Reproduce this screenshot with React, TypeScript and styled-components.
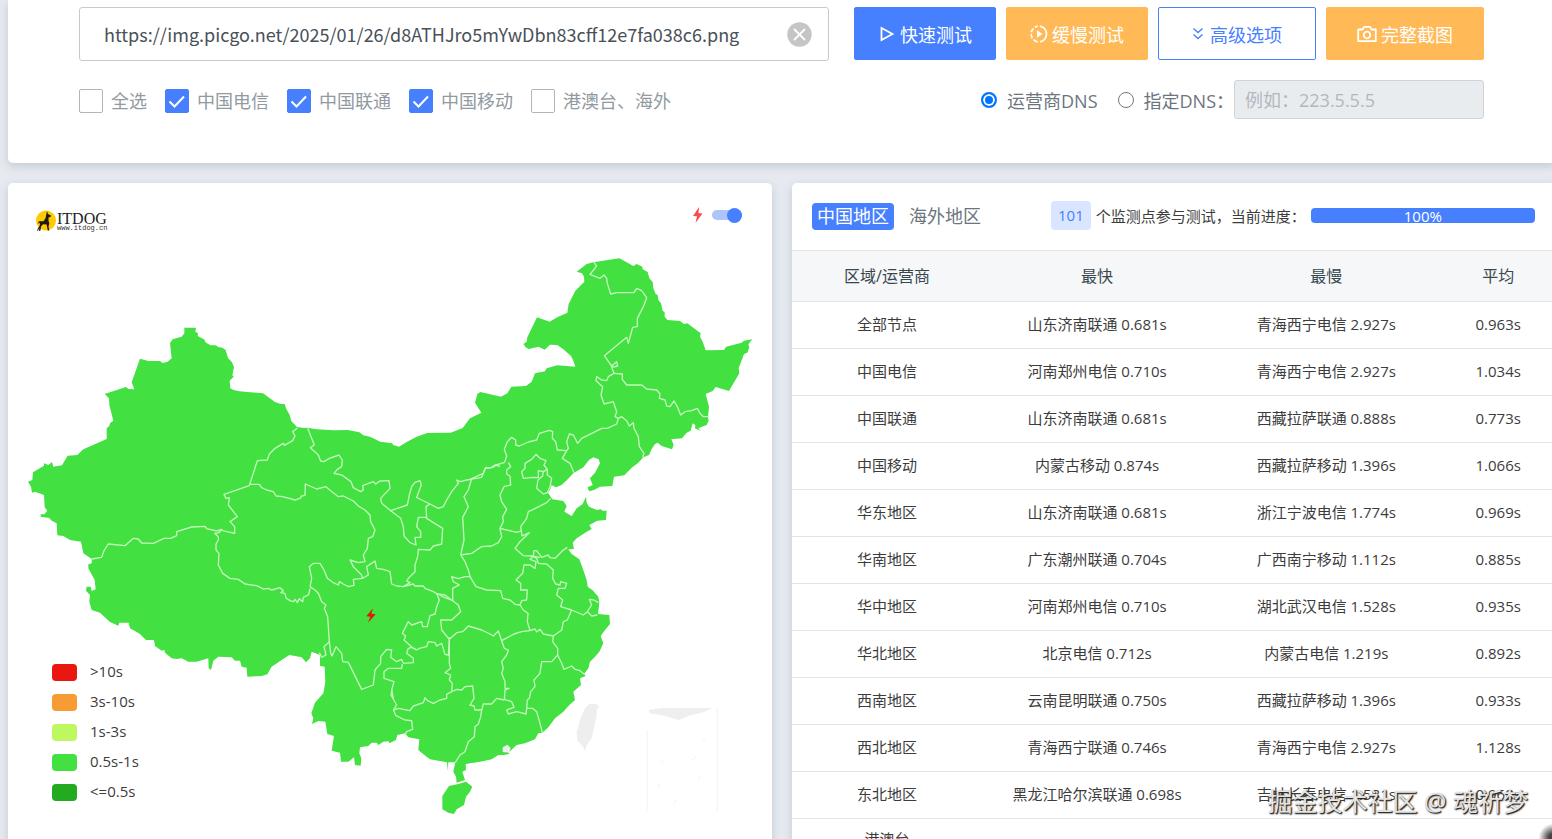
import React, { useState } from "react";
import styled, { createGlobalStyle, css } from "styled-components";

const GlobalStyle = createGlobalStyle`
  * { box-sizing: border-box; }
  body {
    margin: 0;
    background: #e6eaf0;
    color: #3c3c3c;
    font-family: "Open Sans", "Noto Sans CJK SC", sans-serif;
    font-size: 15px;
  }
  button, input { font-family: inherit; }
`;

const Page = styled.div`
  position: relative;
  height: 100vh;
  overflow: hidden;
`;

const Content = styled.div`
  display: flex;
  flex-direction: column;
  gap: 20px;
  margin: 0 -4px 0 8px;
`;

const Card = styled.section`
  background: #fff;
  border-radius: 5px;
  box-shadow: 0 3px 10px rgba(60, 75, 100, 0.2);
`;

const SearchCard = styled(Card)`
  height: 163px;
  padding: 7px 72px 0 71px;
  border-radius: 0 0 5px 5px;
`;

const SearchRow = styled.div`
  display: flex;
  align-items: flex-start;
  gap: 10px;
`;

const UrlBox = styled.div`
  flex: 1;
  display: flex;
  align-items: center;
  height: 54px;
  margin-right: 15px;
  padding: 0 16px 0 24px;
  border: 1px solid #c6cace;
  border-radius: 3px;
`;

const UrlInput = styled.input`
  flex: 1;
  min-width: 0;
  padding: 0;
  border: 0;
  outline: 0;
  color: #495057;
  font-family: "Noto Sans CJK SC", sans-serif;
  font-size: 18px;
  line-height: 28px;
`;

const ClearButton = styled.button`
  display: flex;
  padding: 0;
  border: 0;
  background: none;
`;

const buttonTones = {
  primary: css`background: #4680ff; border-color: #4680ff; color: #fff;`,
  warning: css`background: #ffba57; border-color: #ffba57; color: #fff;`,
  outline: css`background: #fff; border-color: #4680ff; color: #4680ff;`,
};

const ActionButton = styled.button<{ $tone: keyof typeof buttonTones; $wide?: boolean }>`
  display: flex;
  align-items: center;
  justify-content: center;
  gap: 4px;
  width: ${(p) => (p.$wide ? 158 : 142)}px;
  height: 53px;
  padding: 0;
  border: 1px solid;
  border-radius: 2px;
  font-size: 18px;
  ${(p) => buttonTones[p.$tone]}
`;

const OptionRow = styled.div`
  display: flex;
  align-items: center;
  justify-content: space-between;
  margin-top: 19px;
  color: #919aa1;
  font-size: 18px;
`;

const Options = styled.div<{ $gap: number }>`
  display: flex;
  align-items: center;
  gap: ${(p) => p.$gap}px;
`;

const CheckLabel = styled.label`
  display: flex;
  align-items: center;
  gap: 8px;
`;

const CheckBox = styled.input`
  appearance: none;
  width: 24px;
  height: 24px;
  margin: 2px 0 0;
  border: 1px solid #adb5bd;
  border-radius: 2px;
  background: #fff;
  &:checked {
    border-color: #4680ff;
    background: #4680ff;
  }
`;

const CheckWrap = styled.span`
  position: relative;
  display: flex;
  svg {
    position: absolute;
    inset: 2px 0 0;
    pointer-events: none;
  }
`;

const RadioLabel = styled.label`
  display: flex;
  align-items: center;
  gap: 10px;
  color: #6c757d;
`;

const Radio = styled.input`
  appearance: none;
  width: 16px;
  height: 16px;
  margin: 0;
  border: 1px solid #767676;
  border-radius: 50%;
  background: #fff;
  &:checked {
    border: 2px solid #0075ff;
    background: #0075ff;
    box-shadow: inset 0 0 0 2px #fff;
  }
`;

const DnsInput = styled.input`
  width: 250px;
  height: 39px;
  margin-left: -20px;
  padding: 0 10px;
  border: 1px solid #ced4da;
  border-radius: 3px;
  background: #e9ecef;
  font-size: 18px;
  &::placeholder {
    color: #b1b8be;
    opacity: 1;
  }
`;

const Panels = styled.main`
  display: flex;
  align-items: stretch;
  gap: 20px;
`;

const Panel = styled(Card)`
  flex: 1;
  min-width: 0;
  overflow: hidden;
`;

const MapHead = styled.header`
  display: flex;
  align-items: flex-start;
  justify-content: space-between;
  height: 65px;
  padding: 24px 30px 0 26px;
`;

const SwitchLabel = styled.label`
  display: flex;
  align-items: center;
  gap: 9px;
`;

const Switch = styled.input`
  appearance: none;
  display: flex;
  align-items: center;
  justify-content: flex-end;
  width: 30px;
  height: 10px;
  margin: 0;
  border-radius: 5px;
  background: #aec5fc;
  &::before {
    content: "";
    width: 15px;
    height: 15px;
    flex: none;
    border-radius: 50%;
    background: #4680ff;
  }
  &:not(:checked) {
    justify-content: flex-start;
  }
`;

const MapArea = styled.div`
  position: relative;
  > svg {
    display: block;
    width: 100%;
  }
`;

const Legend = styled.ul`
  position: absolute;
  left: 44px;
  top: 408px;
  display: flex;
  flex-direction: column;
  margin: 0;
  padding: 0;
  list-style: none;
`;

const LegendItem = styled.li`
  display: flex;
  align-items: center;
  gap: 13px;
  height: 30px;
  line-height: 20px;
`;

const Swatch = styled.span<{ $color: string }>`
  width: 25px;
  height: 17px;
  margin-top: 2px;
  border-radius: 4px;
  background: ${(p) => p.$color};
`;

const ResultHead = styled.header`
  display: flex;
  align-items: center;
  height: 67px;
  padding: 0 21px 0 20px;
`;

const Tab = styled.button<{ $active?: boolean }>`
  height: 27px;
  margin-right: 10px;
  padding: 0 5px;
  border: 0;
  border-radius: 4px;
  background: ${(p) => (p.$active ? "#4680ff" : "transparent")};
  color: ${(p) => (p.$active ? "#fff" : "#6c757d")};
  font-size: 18px;
  line-height: 27px;
`;

const Progress = styled.div`
  flex: 1;
  display: flex;
  align-items: center;
  gap: 5px;
  margin-left: 55px;
  padding-bottom: 2px;
  white-space: nowrap;
`;

const CountBadge = styled.span`
  padding: 0 7px;
  border-radius: 4px;
  background: #dae6ff;
  color: #4680ff;
  line-height: 29px;
`;

const ProgressBar = styled.div`
  flex: 1;
  height: 15px;
  border-radius: 4px;
  background: #4680ff;
  color: #fff;
  line-height: 16px;
  text-align: center;
`;

const Table = styled.table`
  width: 100%;
  border-collapse: collapse;
  table-layout: fixed;
  text-align: center;
  th, td {
    padding: 0 1px 3px 0;
    border-top: 1px solid #e2e5e8;
    font-weight: 400;
  }
  thead th {
    height: 51px;
    background: #f6f7f8;
    color: #37474f;
    font-size: 16px;
  }
  tbody tr {
    height: 47px;
  }
  tbody tr:last-child th {
    height: 66px;
    line-height: 22px;
  }
`;

const Col = styled.col<{ $share: number }>`
  width: ${(p) => p.$share}%;
`;

const Watermark = styled.div`
  position: absolute;
  right: 24px;
  bottom: 20px;
  color: #e4e4e4;
  font-size: 25px;
  line-height: 36px;
  text-shadow: 1px 1px 1px #222, 1px 1px 2px #444;
`;

const CornerShade = styled.div`
  position: absolute;
  right: -16px;
  bottom: -14px;
  width: 30px;
  height: 30px;
  border-radius: 50%;
  background: radial-gradient(circle, #444 20%, rgba(80, 80, 80, 0) 68%);
`;

/* Map drawing: three units to one pixel at the usual panel width. */

const MAINLAND =
  "553,983 588,983 586,995 594,1000 593,1008 612,1018 618,1028 632,1036 648,1036 654,1041 667,1043 677,1050 684,1074 696,1087 702,1102 697,1125 701,1130 689,1142 691,1165 701,1170 718,1174 789,1180 825,1206 842,1212 854,1212 858,1225 869,1245 874,1263 891,1281 912,1284 922,1283 950,1288 1000,1291 1043,1290 1078,1297 1090,1306 1110,1310 1141,1325 1176,1330 1180,1335 1197,1340 1220,1326 1250,1310 1282,1299 1352,1298 1388,1284 1410,1255 1444,1238 1425,1208 1432,1182 1441,1176 1503,1190 1522,1180 1534,1160 1578,1158 1595,1145 1605,1120 1635,1114 1640,1105 1672,1096 1726,1100 1720,1082 1713,1068 1690,1048 1672,1035 1650,1034 1634,1049 1616,1040 1586,1047 1577,1042 1570,1032 1580,1025 1582,1012 1611,952 1649,965 1672,952 1702,938 1706,912 1726,872 1753,845 1752,830 1746,820 1730,815 1760,792 1780,787 1858,775 1880,787 1900,798 1910,792 1927,800 1928,808 1943,816 1948,835 1958,846 1960,865 1967,882 1973,885 1975,900 1983,910 1988,932 1994,937 1994,950 2002,960 2040,963 2052,972 2062,970 2102,1000 2100,1010 2108,1025 2117,1051 2172,1050 2178,1040 2225,1028 2232,1022 2257,1018 2245,1033 2248,1042 2242,1058 2232,1062 2216,1105 2218,1120 2187,1173 2147,1161 2138,1173 2117,1182 2127,1220 2124,1250 2126,1262 2120,1275 2095,1285 2102,1293 2085,1285 2086,1275 2078,1270 2072,1292 2060,1298 2046,1315 2014,1318 2021,1335 2016,1348 1985,1338 1973,1328 1965,1332 1955,1347 1947,1365 1930,1372 1915,1388 1895,1403 1873,1426 1842,1430 1837,1458 1800,1460 1782,1470 1767,1474 1763,1462 1778,1455 1770,1435 1785,1418 1800,1390 1796,1378 1780,1372 1767,1380 1750,1402 1720,1420 1703,1438 1685,1455 1668,1462 1655,1455 1650,1470 1644,1478 1657,1498 1690,1503 1700,1518 1693,1535 1715,1548 1730,1525 1748,1512 1758,1490 1760,1508 1767,1520 1790,1530 1803,1528 1807,1532 1820,1532 1818,1560 1792,1562 1768,1575 1775,1587 1760,1595 1730,1615 1718,1628 1722,1647 1705,1648 1715,1662 1738,1678 1748,1705 1760,1740 1763,1760 1777,1770 1795,1790 1798,1808 1794,1842 1828,1845 1830,1872 1815,1890 1802,1908 1810,1930 1798,1955 1785,1970 1770,1985 1765,2005 1752,2022 1757,2028 1740,2035 1743,2055 1720,2075 1725,2100 1708,2115 1690,2135 1665,2155 1645,2182 1627,2198 1615,2200 1605,2218 1575,2230 1550,2235 1525,2258 1528,2262 1510,2265 1495,2265 1475,2278 1455,2282 1440,2285 1397,2292 1398,2310 1387,2315 1395,2340 1370,2348 1368,2330 1360,2315 1366,2287 1345,2287 1343,2312 1341,2287 1315,2282 1290,2278 1270,2263 1255,2250 1258,2218 1225,2212 1215,2200 1192,2205 1188,2220 1168,2230 1166,2224 1150,2225 1135,2235 1130,2228 1115,2228 1105,2238 1080,2242 1078,2260 1084,2275 1082,2297 1065,2295 1062,2272 1052,2280 1045,2285 1023,2285 1020,2258 995,2252 1002,2208 982,2202 976,2165 955,2163 936,2172 940,2155 934,2140 945,2108 970,2080 976,2045 974,2000 960,1998 960,1965 935,1955 930,1975 918,1987 905,1972 868,1965 845,1980 815,2000 802,2023 785,2028 742,2030 740,2003 725,2000 720,1982 705,1982 695,1972 655,1970 640,1982 633,2010 626,2005 625,1975 590,1985 565,1985 545,1975 530,1977 515,1975 495,1958 493,1950 485,1952 465,1938 462,1920 438,1920 420,1902 390,1885 386,1868 358,1868 355,1877 330,1866 300,1838 275,1830 268,1805 270,1785 258,1772 260,1760 272,1760 275,1773 287,1768 284,1740 265,1705 265,1693 275,1690 275,1677 250,1660 243,1625 210,1620 190,1608 172,1606 170,1570 155,1562 148,1554 122,1550 122,1543 133,1543 142,1532 134,1522 132,1485 105,1475 96,1478 93,1460 84,1445 97,1440 99,1417 132,1397 132,1390 145,1395 156,1386 160,1400 186,1396 203,1367 232,1365 250,1348 320,1317 320,1285 328,1278 330,1270 340,1262 328,1215 327,1195 314,1182 378,1161 385,1167 403,1168 395,1147 420,1076 445,1083 480,1083 488,1089 503,1085 515,1075 510,1030 518,1018 545,1010 553,1000";

const HAINAN =
  "1347,2358 1375,2352 1398,2345 1417,2360 1410,2375 1398,2390 1392,2415 1370,2428 1362,2442 1345,2438 1327,2428 1327,2388";

const TAIWAN =
  "1768,2112 1788,2112 1798,2120 1790,2128 1790,2145 1782,2185 1775,2215 1760,2235 1756,2255 1750,2240 1732,2222 1730,2195 1742,2155 1755,2125";

/* Province borders, grouped by the region whose corner they are measured from. */
const BORDERS: { origin: [number, number]; lines: string[] }[] = [
  {
    origin: [0, 960],
    lines: [
      "275,717 305,712 312,692 325,672 375,677 400,655 415,657 425,669 460,670 492,655 512,655 530,647 530,635 575,621 615,619 620,626 650,633",
      "650,633 665,628 668,632 704,640 704,620 690,605 712,590 685,555 688,533 678,535 672,523 748,497",
      "748,497 772,422 802,420 808,402 825,385 850,370 853,376 878,362 885,348 878,335 892,324",
      "665,628 658,638 644,640 655,650 655,660 648,672 648,690 657,700 655,735 668,760 690,775 715,778 735,792 770,797 790,807 805,805 815,810 840,803 850,812 842,818 855,820 858,834 870,842 880,845 885,838 892,848 898,836 908,845 910,832 926,824 930,805",
    ],
  },
  {
    origin: [600, 1260],
    lines: [
      "323,25 343,75 331,83 355,105 362,123 372,125 388,115 417,105 427,120 425,140 412,148 402,160 425,165 453,185 460,203 482,215 490,210 488,197 520,185 527,192 540,183 567,182 570,205 542,235 545,250 572,272 622,255 628,225 635,200 645,187 660,182 664,195 650,232 665,240 690,252 715,265 730,260 740,240 755,215 775,190 770,180 782,185 800,180 812,178 845,172 858,142 870,144 885,135 900,139",
      "148,193 178,193 185,203 200,210 220,215 228,228 248,230 285,240 300,235 305,228 315,226 316,192 350,207 378,200 392,212 415,230 430,228 460,243 475,258 495,270 510,285 512,305 525,330 518,350 505,355 502,385 490,405 495,425 475,428 450,420 460,440 485,465 487,475",
      "330,500 335,475 328,440 340,430 360,430 372,450 382,475 400,488 415,495 418,485 430,492 445,500 462,496 460,478 487,475 505,465 500,440 525,423 530,445 550,448 570,455 575,492 590,498 610,500",
      "330,500 345,510 355,520 365,545 378,555 373,565 383,590 388,665 392,700",
      "358,698 365,712 378,705 372,680 388,665",
      "392,700 396,708 408,680 425,700 428,725 445,727 485,808 520,795 525,750 542,730 542,710 560,688 575,690 572,712 590,725 605,718 610,730 640,728 640,715 620,700 625,685 635,682 650,690",
      "607,732 605,745 565,745 552,755 552,775 582,785 575,810 580,835",
      "650,690 658,685 680,680 685,665 705,668 710,678 725,670 735,703 745,705 748,660",
      "650,690 636,682 612,660 617,648 607,640 625,605 635,615 665,605 668,620 682,620 690,587 705,582 710,560 718,540 710,520",
      "610,500 640,492 645,498 670,498 675,505 700,515 712,522 735,525 758,542",
      "610,500 630,488 620,483 625,475 645,455 645,435 653,410 655,388 690,390 700,378 725,372 728,325 680,295 678,260 690,252",
      "680,292 655,292 650,320 662,335 662,352 645,352 648,375 630,368 612,348 610,320 602,295 585,282 572,272",
    ],
  },
  {
    origin: [1410, 750],
    lines: [
      "0,688 40,670 45,655 70,652 78,645 104,637",
      "104,637 110,618 103,598 112,575 125,562 137,570 137,585 148,588 175,576 200,570 208,550 238,541 248,545 247,565 257,575 262,600 290,602 295,595 290,575 298,552 310,555 323,580 335,565 370,548 395,535 412,535 440,522 445,505",
      "445,505 435,500 440,485 430,455 402,462 393,435 398,410 378,392 380,380 395,390 410,392 415,380 432,370",
      "432,370 425,352 443,348 440,335 425,348 403,317 470,262 475,280 488,232 502,230 502,205 520,170 530,143 515,122 500,115 492,128 440,128 422,132 412,100 410,85 402,75 390,85 360,73 380,48 372,37",
      "432,370 457,372 457,388 470,405 515,405 530,417 560,420 570,432 568,445 585,450 590,468 600,470 612,453 622,470 632,495 645,485 665,482 682,475 690,490 700,500 717,500",
      "445,505 455,500 470,512 478,528 490,518 492,535 505,560 508,590 522,610 518,622",
      "290,602 277,625 300,640 312,668",
      "198,613 210,625 228,632 222,645 232,658 220,665 205,662 205,683 188,682 160,685 155,665 165,655 165,640 185,628 198,613",
      "220,662 218,678 204,690 200,715 220,732 232,728 240,710 245,685 232,675 232,658",
    ],
  },
  {
    origin: [1170, 1290],
    lines: [
      "355,98 362,110 350,120 350,132 360,138 362,165 342,170 330,195 335,215 350,238 338,260 340,275 330,295 380,307 396,302",
      "245,145 235,180 222,200 235,230 218,262 222,330 212,375",
      "330,295 335,320 325,338 305,348 275,350 260,360 245,370 212,375",
      "482,205 470,218 430,238 415,245 410,265 392,290 396,318 418,308 390,335 375,355 400,377 425,378 450,382",
      "430,378 432,362 440,362 455,382 475,375 480,383 495,385 510,370 520,360 532,352",
      "430,378 420,388 438,395 435,415 420,405 402,405 398,430 378,450 392,460 392,480 412,480 410,510 395,512 390,525",
      "425,378 440,385 445,400 470,402 490,420 488,445 497,462 510,465 512,455 530,460 525,475 505,475 500,495 518,510 512,530 545,540",
      "212,375 225,395 235,420 240,440 258,470 290,480 332,482 338,505 360,510 375,523 390,525",
      "240,440 225,440 205,446 185,440 190,455 208,465 188,475 188,512 158,500 145,492",
      "188,512 205,525 212,545 185,570 152,570 155,600 178,628",
      "390,525 400,540 414,550 412,575 420,602",
      "178,628 200,608 218,605 235,588 275,600 300,612 310,618 325,603 335,632 372,612 395,605 420,602",
      "420,602 435,597 440,606 450,598 460,612 490,618",
      "490,618 515,600 520,575 532,570 545,540 580,555 592,545 605,525 598,508 612,510 625,518",
      "592,545 605,558 622,555",
    ],
  },
  {
    origin: [870, 1800],
    lines: [
      "790,108 788,125 803,145 803,165 815,190 822,208 845,198 855,208 870,212 882,222",
      "803,165 785,185 755,185 750,220 732,240 735,260 722,275 718,295 712,300 710,325",
      "710,325 728,325 740,335 750,370 757,398",
      "710,325 708,342 680,335 655,342 650,330 672,322 665,305 643,298",
      "478,112 478,190 482,205 465,218 482,225 478,240 487,250 485,275",
      "635,122 643,145 655,150 650,165 635,185 640,205 635,220 645,245 645,265 657,265 645,270 643,300",
      "643,300 620,295 605,312 580,312 575,330 555,330 552,318 540,315 552,295 548,258 525,260 515,270 500,268 485,275",
      "485,275 470,283 470,295 450,300 430,310 412,302 405,293 400,308 370,318 360,332 325,325 310,330",
      "310,330 320,315 303,285 306,270",
      "310,330 318,347 345,360 365,362 368,388 350,395 345,405",
      "575,330 572,350 565,372 555,380 553,410 535,425 525,455 510,465 496,487",
    ],
  },
];

const MapDrawing = () => (
  <svg viewBox="24 744 2292 1860" role="img" aria-label="China response time map">
    <polygon points={MAINLAND} fill="#42e040" />
    <polygon points={HAINAN} fill="#42e040" />
    <polygon points={TAIWAN} fill="#eee" />
    <path d="M1508 2242l14-8 10 10-4 14-20-2z" fill="#eee" />
    <g fill="none" stroke="#c4f7bd" strokeWidth="4" strokeLinejoin="round">
      {BORDERS.map(({ origin, lines }) => (
        <g key={origin.join()} transform={`translate(${origin[0]} ${origin[1]})`}>
          {lines.map((points) => (
            <polyline key={points} points={points} />
          ))}
        </g>
      ))}
    </g>
    <path d="M1119 1825l-20 24 12 1-7 18 23-25-13-2z" fill="#e01a08" />
    <path d="M1946 2130l40-6h150l-24 12-40 10-36 14-40-12-46-8z" fill="#eee" />
    <g fill="none" stroke="#f6f6f6" strokeWidth="4">
      <path d="M1942 2190v242M2152 2124v308" />
      <path d="M2108 2224l8-8M1982 2282l10 6M2100 2328l-6 10M2030 2400l-10 12M1976 2350v12M2090 2270l-16 10" />
    </g>
  </svg>
);

const Logo = () => (
  <svg width="76" height="27" viewBox="0 0 76 27" role="img" aria-label="ITDOG">
    <circle cx="12" cy="13.500" r="10" fill="#fccb08" />
    <path
      d="M13 4l1 3 3 1.500-.5 1.500-2 .5v3l.8 3-.8 3 .8 4h-1.500l-1.200-6-3.600-.3-2 2.300-.5 4-2 .5 1-3-2.500 3.500.6-2.500 2.400-4-.5-2.500-2 1.500 1.500-2.700h4.500l2-3z"
      fill="#24190c"
    />
    <text x="23" y="17" fontFamily="Liberation Serif, serif" fontSize="16" fill="#222">ITDOG</text>
    <text x="23" y="23" fontFamily="Liberation Mono, monospace" fontSize="7" fill="#333">www.itdog.cn</text>
  </svg>
);

const BoltIcon = () => (
  <svg width="10" height="16" viewBox="0 0 10 16" aria-hidden="true">
    <path d="M6 0L0 9l4 .3L2.500 16 9.500 6.500l-4-.5z" fill="#f5504f" />
  </svg>
);

const ClearIcon = () => (
  <svg width="25" height="25" viewBox="0 0 25 25" aria-hidden="true">
    <circle cx="12.500" cy="12.500" r="12.200" fill="#c5c5c5" />
    <path d="M7 7l11 11M18 7L7 18" stroke="#fff" strokeWidth="1.800" />
  </svg>
);

const PlayIcon = () => (
  <svg width="18" height="18" viewBox="0 0 18 18" aria-hidden="true">
    <path d="M3.500 3v12l11-6z" fill="none" stroke="currentColor" strokeWidth="1.800" />
  </svg>
);

const SlowIcon = () => (
  <svg width="18" height="18" viewBox="0 0 18 18" aria-hidden="true">
    <path d="M9.800 1.100a8 8 0 0 1 0 15.800" fill="none" stroke="currentColor" strokeWidth="1.700" />
    <path d="M7.800 1.100a8 8 0 0 0-3 1.200M3.500 3.400a8 8 0 0 0-2.200 3.800M1.100 9a8 8 0 0 0 1.200 4.200M3.500 14.600a8 8 0 0 0 4.300 2.300" fill="none" stroke="currentColor" strokeWidth="1.700" />
    <path d="M7 5.200v7.600L12.500 9z" fill="currentColor" />
  </svg>
);

const ChevronsIcon = () => (
  <svg width="14" height="14" viewBox="0 0 14 14" aria-hidden="true">
    <path d="M1.500 1.500L6 5.500l4.500-4M1.500 7.500l4.500 4 4.500-4" fill="none" stroke="currentColor" strokeWidth="1.400" />
  </svg>
);

const CameraIcon = () => (
  <svg width="20" height="18" viewBox="0 0 20 18" aria-hidden="true">
    <path d="M1.200 4.500h4.300l1.500-2.600h6l1.500 2.600h4.300v11.700H1.200z" fill="none" stroke="currentColor" strokeWidth="1.800" strokeLinejoin="round" />
    <circle cx="10" cy="10" r="3.300" fill="none" stroke="currentColor" strokeWidth="1.800" />
  </svg>
);

const Tick = () => (
  <svg width="24" height="24" viewBox="0 0 24 24" aria-hidden="true">
    <path d="M4.500 12.500l5 5L19 7.500" fill="none" stroke="#fff" strokeWidth="2" />
  </svg>
);

const CARRIERS: [string, boolean][] = [
  ["全选", false],
  ["中国电信", true],
  ["中国联通", true],
  ["中国移动", true],
  ["港澳台、海外", false],
];

const LEGEND: [string, string][] = [
  [">10s", "#e91710"],
  ["3s-10s", "#f79c35"],
  ["1s-3s", "#bef75f"],
  ["0.5s-1s", "#42e040"],
  ["<=0.5s", "#22aa20"],
];

const ROWS: [string, string, string, string][] = [
  ["全部节点", "山东济南联通 0.681s", "青海西宁电信 2.927s", "0.963s"],
  ["中国电信", "河南郑州电信 0.710s", "青海西宁电信 2.927s", "1.034s"],
  ["中国联通", "山东济南联通 0.681s", "西藏拉萨联通 0.888s", "0.773s"],
  ["中国移动", "内蒙古移动 0.874s", "西藏拉萨移动 1.396s", "1.066s"],
  ["华东地区", "山东济南联通 0.681s", "浙江宁波电信 1.774s", "0.969s"],
  ["华南地区", "广东潮州联通 0.704s", "广西南宁移动 1.112s", "0.885s"],
  ["华中地区", "河南郑州电信 0.710s", "湖北武汉电信 1.528s", "0.935s"],
  ["华北地区", "北京电信 0.712s", "内蒙古电信 1.219s", "0.892s"],
  ["西南地区", "云南昆明联通 0.750s", "西藏拉萨移动 1.396s", "0.933s"],
  ["西北地区", "青海西宁联通 0.746s", "青海西宁电信 2.927s", "1.128s"],
  ["东北地区", "黑龙江哈尔滨联通 0.698s", "吉林长春电信 1.581s", "0.968s"],
];

const CarrierOption = ({ name, initial }: { name: string; initial: boolean }) => {
  const [on, setOn] = useState(initial);
  return (
    <CheckLabel>
      <CheckWrap>
        <CheckBox type="checkbox" checked={on} onChange={() => setOn(!on)} />
        {on && <Tick />}
      </CheckWrap>
      {name}
    </CheckLabel>
  );
};

export default function App() {
  return (
    <Page>
      <GlobalStyle />
      <Content>
        <SearchCard>
          <SearchRow>
            <UrlBox>
              <UrlInput
                type="text"
                aria-label="URL"
                defaultValue="https://img.picgo.net/2025/01/26/d8ATHJro5mYwDbn83cff12e7fa038c6.png"
              />
              <ClearButton type="button" aria-label="Clear">
                <ClearIcon />
              </ClearButton>
            </UrlBox>
            <ActionButton type="button" $tone="primary"><PlayIcon />快速测试</ActionButton>
            <ActionButton type="button" $tone="warning"><SlowIcon />缓慢测试</ActionButton>
            <ActionButton type="button" $tone="outline" $wide><ChevronsIcon />高级选项</ActionButton>
            <ActionButton type="button" $tone="warning" $wide><CameraIcon />完整截图</ActionButton>
          </SearchRow>
          <OptionRow>
            <Options $gap={18}>
              {CARRIERS.map(([name, on]) => (
                <CarrierOption key={name} name={name} initial={on} />
              ))}
            </Options>
            <Options $gap={20}>
              <RadioLabel>
                <Radio type="radio" name="dns" defaultChecked />
                运营商DNS
              </RadioLabel>
              <RadioLabel>
                <Radio type="radio" name="dns" />
                指定DNS：
              </RadioLabel>
              <DnsInput type="text" aria-label="DNS" placeholder="例如：223.5.5.5" disabled />
            </Options>
          </OptionRow>
        </SearchCard>

        <Panels>
          <Panel>
            <MapHead>
              <Logo />
              <SwitchLabel>
                <BoltIcon />
                <Switch type="checkbox" role="switch" aria-label="Map effect" defaultChecked />
              </SwitchLabel>
            </MapHead>
            <MapArea>
              <MapDrawing />
              <Legend>
                {LEGEND.map(([label, color]) => (
                  <LegendItem key={label}>
                    <Swatch $color={color} />
                    {label}
                  </LegendItem>
                ))}
              </Legend>
            </MapArea>
          </Panel>

          <Panel>
            <ResultHead>
              <Tab type="button" $active>中国地区</Tab>
              <Tab type="button">海外地区</Tab>
              <Progress>
                <CountBadge>101</CountBadge>
                <span>个监测点参与测试，当前进度：</span>
                <ProgressBar role="progressbar" aria-valuenow={100}>100%</ProgressBar>
              </Progress>
            </ResultHead>
            <Table>
              <colgroup>
                <Col $share={25} />
                <Col $share={30} />
                <Col $share={30} />
                <Col $share={15} />
              </colgroup>
              <thead>
                <tr>
                  <th scope="col">区域/运营商</th>
                  <th scope="col">最快</th>
                  <th scope="col">最慢</th>
                  <th scope="col">平均</th>
                </tr>
              </thead>
              <tbody>
                {ROWS.map(([area, fastest, slowest, average]) => (
                  <tr key={area}>
                    <th scope="row">{area}</th>
                    <td>{fastest}</td>
                    <td>{slowest}</td>
                    <td>{average}</td>
                  </tr>
                ))}
                <tr>
                  <th scope="row">港澳台<br />海外</th>
                  <td />
                  <td />
                  <td />
                </tr>
              </tbody>
            </Table>
          </Panel>
        </Panels>
      </Content>
      <Watermark>掘金技术社区 @ 魂祈梦</Watermark>
      <CornerShade />
    </Page>
  );
}
